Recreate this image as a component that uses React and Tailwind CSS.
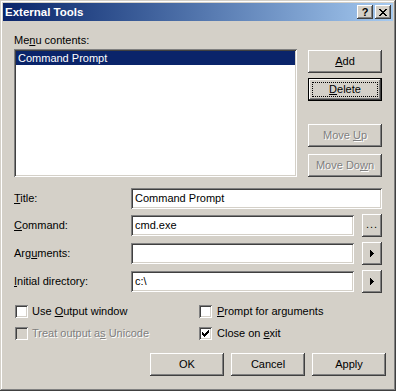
import React from "react";

const raised =
  "bg-[#d4d0c8] shadow-[inset_-1px_-1px_#404040,inset_1px_1px_#ffffff,inset_-2px_-2px_#808080,inset_2px_2px_#d4d0c8]";
const sunken =
  "bg-white shadow-[inset_1px_1px_#808080,inset_-1px_-1px_#ffffff,inset_2px_2px_#404040,inset_-2px_-2px_#d4d0c8]";
const disabledText = "text-[#808080] [text-shadow:1px_1px_0_#ffffff]";

function U({ children }) {
  return <span className="underline underline-offset-[1px]">{children}</span>;
}

function Btn({ children, className = "", disabled }) {
  return (
    <div
      className={`flex h-[23px] items-center justify-center ${raised} ${
        disabled ? disabledText : "text-black"
      } ${className}`}
    >
      <span className="flex items-center">{children}</span>
    </div>
  );
}

function DefaultBtn({ children }) {
  return (
    <div className="flex h-[23px] border border-black p-0">
      <div className={`flex flex-1 p-[3px] ${raised}`}>
        <div className="flex flex-1 items-center justify-center border border-dotted border-black">
          <span>{children}</span>
        </div>
      </div>
    </div>
  );
}

function Arrow() {
  return (
    <svg width="4" height="7" viewBox="0 0 4 7" shapeRendering="crispEdges">
      <rect x="0" y="0" width="1" height="7" fill="#000" />
      <rect x="1" y="1" width="1" height="5" fill="#000" />
      <rect x="2" y="2" width="1" height="3" fill="#000" />
      <rect x="3" y="3" width="1" height="1" fill="#000" />
    </svg>
  );
}

const checkPx = [
  [6], [5, 6], [0, 4, 5, 6], [0, 1, 3, 4, 5], [0, 1, 2, 3, 4], [1, 2, 3], [2],
];

function Checkbox({ checked, disabled }) {
  return (
    <div
      className={`flex h-[13px] w-[13px] shrink-0 items-center justify-center ${sunken} ${
        disabled ? "!bg-[#d4d0c8]" : ""
      }`}
    >
      {checked && (
        <svg width="7" height="7" viewBox="0 0 7 7" shapeRendering="crispEdges">
          {checkPx.map((cols, r) =>
            cols.map((c) => (
              <rect key={`${r}-${c}`} x={c} y={r} width="1" height="1" fill="#000" />
            ))
          )}
        </svg>
      )}
    </div>
  );
}

function Field({ label, value, width, extra }) {
  return (
    <div className="flex h-[21px] items-center">
      <div className="w-[117px]">{label}</div>
      <div className={`flex h-[21px] items-center px-[4px] ${sunken}`} style={{ width }}>
        {value}
      </div>
      {extra && (
        <Btn className="ml-[8px] h-[21px] w-[20px]">{extra}</Btn>
      )}
    </div>
  );
}

export default function App() {
  return (
    <div className="h-[391px] w-[396px] bg-[#d4d0c8] p-[3px] font-['Liberation_Sans',Arial,sans-serif] text-[11px] leading-[13px] text-black shadow-[inset_-1px_-1px_#404040,inset_1px_1px_#d4d0c8,inset_-2px_-2px_#808080,inset_2px_2px_#ffffff]">
      {/* title bar */}
      <div className="flex h-[18px] items-center bg-gradient-to-r from-[#0a246a] to-[#a6caf0] pl-[2px] pr-[2px]">
        <span className="flex-1 text-[11.5px] font-bold text-white">External Tools</span>
        <div className={`flex h-[14px] w-[16px] items-center justify-center text-[11px] font-bold ${raised}`}>
          ?
        </div>
        <div className={`ml-[2px] flex h-[14px] w-[16px] items-center justify-center ${raised}`}>
          <svg width="8" height="7" viewBox="0 0 8 7" shapeRendering="crispEdges">
            <path d="M0 0h2v1h1v1h2v-1h1v-1h2v1h-1v1h-1v1h-1v1h1v1h1v1h1v1h-2v-1h-1v-1h-2v1h-1v1h-2v-1h1v-1h1v-1h1v-1h-1v-1h-1v-1h-1z" fill="#000" />
          </svg>
        </div>
      </div>

      {/* client */}
      <div className="pl-[11px] pt-[13px]">
        <div className="flex">
          <div className="w-[283px]">
            <div className="h-[15px]">
              Me<U>n</U>u contents:
            </div>
            <div className={`h-[128px] p-[2px] ${sunken}`}>
              <div className="flex h-[14px] items-center bg-[#0a246a] pl-[2px] text-white">
                Command Prompt
              </div>
            </div>
          </div>
          <div className="ml-[11px] w-[74px] pt-[16px]">
            <Btn>
              <U>A</U>dd
            </Btn>
            <div className="mt-[5px]">
              <DefaultBtn>
                <U>D</U>elete
              </DefaultBtn>
            </div>
            <Btn className="mt-[23px]" disabled>
              <span>
                Move <U>U</U>p
              </span>
            </Btn>
            <Btn className="mt-[7px]" disabled>
              <span>
                Move Do<U>w</U>n
              </span>
            </Btn>
          </div>
        </div>

        <div className="mt-[11px]">
          <Field label={<><U>T</U>itle:</>} value="Command Prompt" width={251} />
          <div className="mt-[6px]">
            <Field
              label={<><U>C</U>ommand:</>}
              value="cmd.exe"
              width={223}
              extra={<span className="-mt-[2px] tracking-[1px]">...</span>}
            />
          </div>
          <div className="mt-[7px]">
            <Field label={<>Arg<U>u</U>ments:</>} value="" width={223} extra={<Arrow />} />
          </div>
          <div className="mt-[7px]">
            <Field label={<><U>I</U>nitial directory:</>} value="c:\" width={223} extra={<Arrow />} />
          </div>
        </div>

        <div className="mt-[11px] grid grid-cols-[184px_1fr] gap-y-[5px] pl-[1px]">
          <div className="flex h-[17px] items-center gap-[4px]">
            <Checkbox />
            <span>
              Use <U>O</U>utput window
            </span>
          </div>
          <div className="flex h-[17px] items-center gap-[5px]">
            <Checkbox />
            <span>
              <U>P</U>rompt for arguments
            </span>
          </div>
          <div className="flex h-[17px] items-center gap-[4px]">
            <Checkbox disabled />
            <span className={disabledText}>
              Treat output a<U>s</U> Unicode
            </span>
          </div>
          <div className="flex h-[17px] items-center gap-[5px]">
            <Checkbox checked />
            <span>
              Close on <U>e</U>xit
            </span>
          </div>
        </div>

        <div className="ml-[136px] mt-[11px] flex gap-[7px]">
          <Btn className="w-[74px]">OK</Btn>
          <Btn className="w-[74px]">Cancel</Btn>
          <Btn className="w-[74px]">Apply</Btn>
        </div>
      </div>
    </div>
  );
}
